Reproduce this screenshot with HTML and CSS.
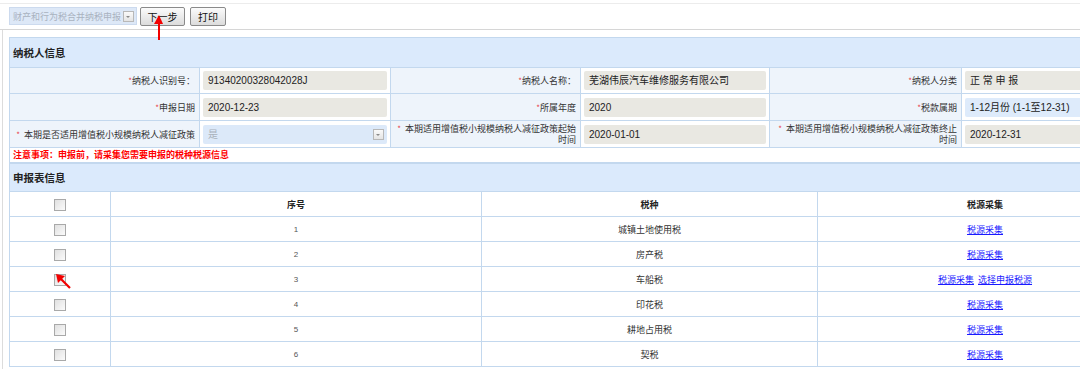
FILE: index.html
```html
<!DOCTYPE html>
<html lang="zh-CN">
<head>
    <meta charset="UTF-8">
    <title>财产和行为税合并纳税申报</title>
    <link rel="stylesheet" href="styles.css">
</head>
<body>

    <div class="toolbar">
        <div class="select-box">
            <span>财产和行为税合并纳税申报</span>
            <span class="drop"></span>
        </div>
        <button class="btn btn-next">下一步</button>
        <button class="btn btn-print">打印</button>
    </div>

    <div class="content">
        <table class="info">
            <colgroup>
                <col style="width:190px"><col style="width:191px"><col style="width:190px">
                <col style="width:189px"><col style="width:192px"><col style="width:190px">
            </colgroup>
            <tr class="panel-head"><td colspan="6">纳税人信息</td></tr>
            <tr class="r1">
                <td class="lbl"><i>*</i>纳税人识别号：</td>
                <td class="val"><div class="field">91340200328042028J</div></td>
                <td class="lbl"><i>*</i>纳税人名称：</td>
                <td class="val"><div class="field">芜湖伟辰汽车维修服务有限公司</div></td>
                <td class="lbl"><i>*</i>纳税人分类</td>
                <td class="val"><div class="field">正 常 申 报</div></td>
            </tr>
            <tr class="r2">
                <td class="lbl"><i>*</i>申报日期</td>
                <td class="val"><div class="field">2020-12-23</div></td>
                <td class="lbl"><i>*</i>所属年度</td>
                <td class="val"><div class="field">2020</div></td>
                <td class="lbl"><i>*</i>税款属期</td>
                <td class="val"><div class="field field-blue">1-12月份 (1-1至12-31)</div></td>
            </tr>
            <tr class="r3">
                <td class="lbl"><i class="sp">*</i>本期是否适用增值税小规模纳税人减征政策</td>
                <td class="val"><div class="field field-select">是<span class="drop"></span></div></td>
                <td class="lbl two"><i class="sp">*</i>本期适用增值税小规模纳税人减征政策起始<br>时间</td>
                <td class="val"><div class="field">2020-01-01</div></td>
                <td class="lbl two"><i class="sp">*</i>本期适用增值税小规模纳税人减征政策终止<br>时间</td>
                <td class="val"><div class="field">2020-12-31</div></td>
            </tr>
            <tr class="notice"><td colspan="6">注意事项：申报前，请采集您需要申报的税种税源信息</td></tr>
        </table>

        <table class="report">
            <colgroup>
                <col style="width:101px"><col style="width:371px"><col style="width:336px"><col style="width:335px">
            </colgroup>
            <tr class="panel-head"><td colspan="4">申报表信息</td></tr>
            <tr class="thead">
                <td><span class="chk"></span></td>
                <td>序号</td>
                <td>税种</td>
                <td>税源采集</td>
            </tr>
            <tr><td><span class="chk"></span></td><td class="num">1</td><td>城镇土地使用税</td><td><a href="#">税源采集</a></td></tr>
            <tr><td><span class="chk"></span></td><td class="num">2</td><td>房产税</td><td><a href="#">税源采集</a></td></tr>
            <tr><td><span class="chk"></span></td><td class="num">3</td><td>车船税</td><td><a href="#">税源采集</a>&nbsp; <a href="#">选择申报税源</a></td></tr>
            <tr><td><span class="chk"></span></td><td class="num">4</td><td>印花税</td><td><a href="#">税源采集</a></td></tr>
            <tr><td><span class="chk"></span></td><td class="num">5</td><td>耕地占用税</td><td><a href="#">税源采集</a></td></tr>
            <tr><td><span class="chk"></span></td><td class="num">6</td><td>契税</td><td><a href="#">税源采集</a></td></tr>
        </table>
    </div>

    <!-- 标注箭头 -->
    <svg class="mark mark-top" width="14" height="26" viewBox="0 0 14 26">
        <path d="M7 25 L7 6" stroke="#f20000" stroke-width="2"/>
        <path d="M2 9 L7 0 L11 9 Z" fill="#f20000"/>
    </svg>
    <svg class="mark mark-chk" width="16" height="16" viewBox="0 0 16 16">
        <path d="M14 14 L5 5" stroke="#f20000" stroke-width="2.2"/>
        <path d="M0 0 L9 2 L2 9 Z" fill="#f20000"/>
    </svg>

</body>
</html>
```

FILE: styles.css
```css
body {
    margin: 0;
    padding: 0;
    background: #fff;
    font-family: "Liberation Sans", "Noto Sans CJK SC", sans-serif;
    color: #333;
    overflow: hidden;
    width: 1080px;
    height: 369px;
    position: relative;
}

.toolbar {
    margin-top: 3px;
    border-top: 1px solid #ececec;
    border-bottom: 1px solid #d6d6d6;
    display: flex;
    align-items: flex-start;
    padding: 3px 0 0 9px;
    box-sizing: border-box;
    height: 27px;
}

.select-box {
    width: 128px;
    height: 18px;
    box-sizing: border-box;
    background: #dde8f7;
    border: 1px solid #ccdaee;
    display: flex;
    align-items: center;
    justify-content: space-between;
    padding: 0 2px 0 3px;
    font-size: 9px;
    color: #a9b2bf;
}

.drop {
    display: inline-block;
    width: 11px;
    height: 11px;
    box-sizing: border-box;
    border: 1px solid #b8b8b8;
    background: linear-gradient(#fafafa, #e4e4e4);
    position: relative;
}

.drop::after {
    content: "";
    position: absolute;
    left: 2px;
    top: 4px;
    border-left: 2.5px solid transparent;
    border-right: 2.5px solid transparent;
    border-top: 2.5px solid #888;
}

.btn {
    margin-left: 3px;
    height: 19px;
    padding: 0;
    border: 1px solid #8a8a8a;
    border-radius: 2px;
    background: linear-gradient(#fbfbfb, #dcdcdc);
    font-family: "Noto Sans CJK SC", sans-serif;
    font-size: 10px;
    color: #111;
    line-height: 17px;
}

.btn-next {
    width: 45px;
}

.btn-print {
    width: 36px;
    margin-left: 5px;
}

.content {
    margin-left: 2px;
    border-left: 1px solid #dcdcdc;
    padding: 7px 0 0 6px;
    width: 1160px;
    height: 340px;
}

table {
    border-collapse: collapse;
    table-layout: fixed;
    width: 1143px;
}

td {
    border: 1px solid #c3d8ee;
    padding: 0;
}

.panel-head td {
    background: #dbeafc;
    font-family: "Noto Sans CJK SC", sans-serif;
    font-weight: bold;
    font-size: 10.5px;
    color: #222;
    padding-left: 3px;
    height: 29px;
}

.info .r1 td {
    height: 25px;
}

.info .r2 td,
.info .r3 td {
    height: 26px;
}

.lbl {
    background: #eef4fb;
    text-align: right;
    padding-right: 4px;
    font-family: "Noto Sans CJK SC", sans-serif;
    font-size: 9px;
    color: #333;
    line-height: 11px;
}

.lbl i {
    font-style: normal;
    color: #e8424a;
    font-size: 8px;
}

.lbl i.sp {
    margin-right: 4px;
}

.val {
    background: #fff;
    padding: 0 3px;
}

.field {
    height: 19px;
    line-height: 19px;
    background: #e9e8e2;
    border-radius: 2px;
    padding-left: 5px;
    font-family: "Liberation Sans", "Noto Sans CJK SC", sans-serif;
    font-size: 10px;
    color: #222;
    white-space: nowrap;
    overflow: hidden;
}

.field-blue {
    background: #deebfb;
}

.field-select {
    background: #dce9f9;
    color: #a9b1bb;
    display: flex;
    align-items: center;
    justify-content: space-between;
    padding-right: 3px;
}

.notice td {
    height: 14px;
    background: #fff;
    font-family: "Noto Sans CJK SC", sans-serif;
    font-weight: bold;
    font-size: 9px;
    color: #f00;
    padding-left: 3px;
    line-height: 12px;
}

.report tr td {
    height: 24px;
    text-align: center;
    font-family: "Noto Sans CJK SC", sans-serif;
    font-size: 9px;
    color: #333;
    background: #fff;
}

.report .panel-head td {
    text-align: left;
    height: 27px;
    background: #dbeafc;
    font-size: 10.5px;
    color: #222;
}

.report .thead td {
    font-weight: bold;
    color: #222;
}

.report .num {
    font-family: "Liberation Sans", sans-serif;
    font-size: 8px;
    color: #555;
}

.chk {
    display: inline-block;
    width: 10px;
    height: 10px;
    border: 1px solid #a9a9a9;
    background: linear-gradient(135deg, #e0e0e0, #fbfbfb);
    vertical-align: middle;
}

a {
    color: #1a1aff;
    text-decoration: underline;
}

.mark {
    position: absolute;
}

.mark-top {
    left: 152px;
    top: 15px;
}

.mark-chk {
    left: 56px;
    top: 274px;
}
```
